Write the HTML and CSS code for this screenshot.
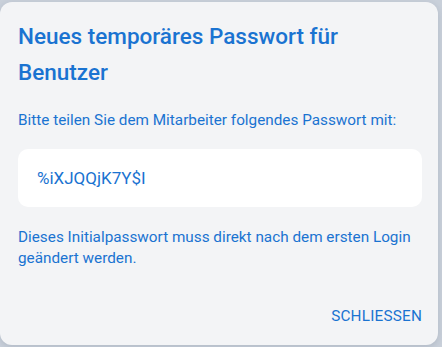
FILE: index.html
```html
<!DOCTYPE html>
<html lang="de">
<head>
<meta charset="utf-8">
<link rel="stylesheet" href="styles.css">
</head>
<body>
<div class="dialog">
  <h2 class="title">Neues temporäres Passwort für Benutzer</h2>
  <p class="text">Bitte teilen Sie dem Mitarbeiter folgendes Passwort mit:</p>
  <div class="pw">%iXJQQjK7Y$I</div>
  <p class="text note">Dieses Initialpasswort muss direkt nach dem ersten Login geändert werden.</p>
  <div class="actions"><button class="btn">SCHLIESSEN</button></div>
</div>
</body>
</html>
```
FILE: styles.css
```css
html, body { margin: 0; padding: 0; }
body {
  background: #c9d0da;
  width: 442px;
  height: 347px;
  overflow: hidden;
  font-family: Roboto, "Noto Sans", sans-serif;
  color: #1a73d1;
}
.dialog {
  box-sizing: border-box;
  margin-top: 2px;
  width: 438px;
  height: 343px;
  background: #f3f4f6;
  border-radius: 12px;
  padding: 16px 16px 0 18px;
  display: flex;
  flex-direction: column;
  box-shadow: 0 2px 6px rgba(40,60,90,0.15);
}
.title {
  margin: 0;
  font-size: 22.5px;
  font-weight: 500;
  line-height: 36px;
  padding-right: 60px;
}
.text {
  margin: 0;
  font-size: 15.3px;
  line-height: 21px;
}
.dialog .text:first-of-type { margin-top: 20px; }
.pw {
  margin-top: 18px;
  height: 58px;
  background: #fff;
  border-radius: 10px;
  display: flex;
  align-items: center;
  padding-left: 19px;
  font-size: 17px;
}
.note { margin-top: 20px; }
.actions {
  margin-top: auto;
  display: flex;
  justify-content: flex-end;
  padding-bottom: 20px;
}
.btn {
  background: none;
  border: 0;
  padding: 0;
  font-family: inherit;
  font-size: 15.3px;
  color: #1a73d1;
  letter-spacing: 0.2px;
}
```
